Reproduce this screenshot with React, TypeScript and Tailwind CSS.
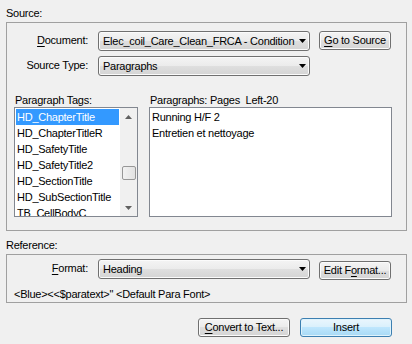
import type { ReactNode } from 'react'

const btnBg =
  'rounded-[3px] border border-[#707070] bg-[linear-gradient(#f4f4f4_0%,#ebebeb_50%,#dfdfdf_50%,#d4d4d4_100%)] shadow-[inset_0_0_0_1px_#fbfbfb]'

function DropArrow() {
  return (
    <svg width="7" height="4" viewBox="0 0 7 4" className="shrink-0">
      <path d="M0 0h7L3.5 4z" fill="#000" />
    </svg>
  )
}

function Combo({ value }: { value: string }) {
  return (
    <div className={`flex h-[20px] w-[212px] items-center pl-[4px] pr-[3px] ${btnBg}`}>
      <span className="flex-1 overflow-hidden whitespace-nowrap pr-[6px]">{value}</span>
      <DropArrow />
    </div>
  )
}

function Button({ children, className = '' }: { children: ReactNode; className?: string }) {
  return (
    <button
      type="button"
      className={`flex h-[19px] w-[72px] items-center justify-center leading-none ${btnBg} ${className}`}
    >
      {children}
    </button>
  )
}

function Key({ children }: { children: ReactNode }) {
  return <span className="underline underline-offset-[2px]">{children}</span>
}

function ScrollArrow({ up }: { up?: boolean }) {
  return (
    <div className="flex h-[17px] items-center justify-center">
      <svg width="7" height="4" viewBox="0 0 7 4">
        <path d={up ? 'M0 4h7L3.5 0z' : 'M0 0h7L3.5 4z'} fill="#606060" />
      </svg>
    </div>
  )
}

const tags = [
  'HD_ChapterTitle',
  'HD_ChapterTitleR',
  'HD_SafetyTitle',
  'HD_SafetyTitle2',
  'HD_SectionTitle',
  'HD_SubSectionTitle',
  'TB_CellBodyC',
]

export default function App() {
  return (
    <div className="h-[344px] w-[412px] overflow-hidden bg-[#f0f0f0] px-[6px] pt-[7px] font-['Liberation_Sans',Arial,sans-serif] text-[11px] leading-[13px] tracking-[-0.25px] text-black">
      <div>Source:</div>

      {/* Source group */}
      <div className="mt-[2px] h-[209px] w-[401px] border border-[#a0a0a0] pt-[8px]">
        <div className="flex items-start">
          <div className="w-[91px] pr-[10px] pt-[3px] text-right">
            <Key>D</Key>ocument:
          </div>
          <Combo value="Elec_coil_Care_Clean_FRCA - Condition" />
          <Button className="ml-[9px]">
            <Key>G</Key>o to Source
          </Button>
        </div>
        <div className="mt-[5px] flex items-start">
          <div className="w-[91px] pr-[10px] pt-[3px] text-right">Source Type:</div>
          <Combo value="Paragraphs" />
        </div>

        <div className="mt-[18px] flex pl-[7px]">
          <div className="w-[124px]">
            <div className="pl-[1px]">Paragraph Tags:</div>
            <div className="flex h-[110px] border border-[#828790] bg-white">
              <div className="flex-1 overflow-hidden p-[1px]">
                {tags.map((t, i) => (
                  <div
                    key={t}
                    className={`h-[16px] whitespace-nowrap pl-[1px] leading-[16px] ${
                      i === 0 ? 'bg-[#3399ff] text-white' : ''
                    }`}
                  >
                    {t}
                  </div>
                ))}
              </div>
              <div className="flex w-[17px] flex-col bg-[#f0f0f0]">
                <ScrollArrow up />
                <div className="flex-1 px-[1px]">
                  <div className="mx-auto mt-[41px] h-[14px] w-[14px] rounded-[2px] border border-[#979797] bg-[linear-gradient(90deg,#f2f2f2,#e2e2e2)]" />
                </div>
                <ScrollArrow />
              </div>
            </div>
          </div>

          <div className="ml-[11px] w-[243px]">
            <div className="whitespace-pre pl-[1px]">Paragraphs: Pages  Left-20</div>
            <div className="h-[110px] border border-[#828790] bg-white p-[1px]">
              <div className="h-[16px] pl-[1px] leading-[16px]">Running H/F 2</div>
              <div className="h-[16px] pl-[1px] leading-[16px]">Entretien et nettoyage</div>
            </div>
          </div>
        </div>
      </div>

      <div className="mt-[8px]">Reference:</div>

      {/* Reference group */}
      <div className="mt-[2px] h-[49px] w-[401px] border border-[#a0a0a0] pt-[4px]">
        <div className="flex items-start">
          <div className="w-[91px] pr-[10px] pt-[3px] text-right">
            <Key>F</Key>ormat:
          </div>
          <Combo value="Heading" />
          <Button className="ml-[9px] mt-[2px]">
            Edit F<Key>o</Key>rmat...
          </Button>
        </div>
        <div className="mt-[8px] pl-[7px]">{'<Blue><<$paratext>" <Default Para Font>'}</div>
      </div>

      <div className="mt-[15px] flex justify-end gap-[10px] pr-[14px]">
        <Button className="w-[92px]">
          <Key>C</Key>onvert to Text...
        </Button>
        <button
          type="button"
          className="flex h-[19px] w-[92px] items-center justify-center rounded-[3px] border border-[#3c7fb1] bg-[linear-gradient(#eaf6fd_0%,#d9f0fc_50%,#bee6fd_50%,#a7d9f5_100%)] leading-none shadow-[inset_0_0_0_1px_#dff3fc]"
        >
          Insert
        </button>
      </div>
    </div>
  )
}
